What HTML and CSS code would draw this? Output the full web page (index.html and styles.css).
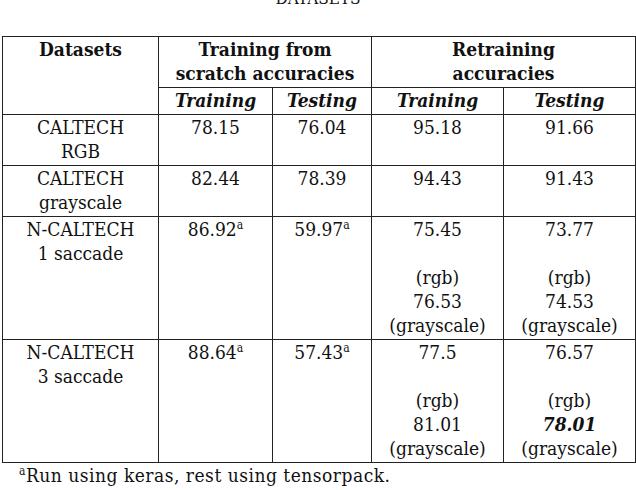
FILE: index.html
```html
<!DOCTYPE html>
<html lang="en">
<head>
  <meta charset="UTF-8">
  <title>Datasets</title>
  <link rel="stylesheet" href="styles.css">
</head>
<body>
  <p class="caption">Datasets</p>

  <table class="results">
    <colgroup>
      <col class="c-name">
      <col class="c-train">
      <col class="c-test">
      <col class="c-retrain">
      <col class="c-retest">
    </colgroup>
    <thead>
      <tr>
        <th rowspan="2">Datasets</th>
        <th colspan="2">Training from<br>scratch accuracies</th>
        <th colspan="2">Retraining<br>accuracies</th>
      </tr>
      <tr class="sub">
        <th>Training</th>
        <th>Testing</th>
        <th>Training</th>
        <th>Testing</th>
      </tr>
    </thead>
    <tbody>
      <tr>
        <td>CALTECH<br>RGB</td>
        <td>78.15</td>
        <td>76.04</td>
        <td>95.18</td>
        <td>91.66</td>
      </tr>
      <tr>
        <td>CALTECH<br>grayscale</td>
        <td>82.44</td>
        <td>78.39</td>
        <td>94.43</td>
        <td>91.43</td>
      </tr>
      <tr>
        <td>N-CALTECH<br>1 saccade</td>
        <td>86.92<sup>a</sup></td>
        <td>59.97<sup>a</sup></td>
        <td>75.45<br><br>(rgb)<br>76.53<br>(grayscale)</td>
        <td>73.77<br><br>(rgb)<br>74.53<br>(grayscale)</td>
      </tr>
      <tr>
        <td>N-CALTECH<br>3 saccade</td>
        <td>88.64<sup>a</sup></td>
        <td>57.43<sup>a</sup></td>
        <td>77.5<br><br>(rgb)<br>81.01<br>(grayscale)</td>
        <td>76.57<br><br>(rgb)<br><b class="best">78.01</b><br>(grayscale)</td>
      </tr>
    </tbody>
  </table>

  <p class="note"><sup>a</sup>Run using keras, rest using tensorpack.</p>
</body>
</html>
```

FILE: styles.css
```css
html, body {
  margin: 0;
  padding: 0;
  background: #fff;
  color: #111;
}
body,
.results,
.results th,
.results td {
  font-family: "DejaVu Serif Condensed", "DejaVu Serif", serif;
}
.caption {
  margin: -12px 0 28px;
  font-size: 17px;
  line-height: 20px;
  text-align: center;
  text-transform: uppercase;
}
.results {
  margin-left: 2px;
  width: 633px;
  table-layout: fixed;
  border-collapse: collapse;
  border: 1px solid #222;
  font-size: 19px;
  line-height: 24px;
}
.c-name { width: 156px; }
.c-train { width: 114px; }
.c-test { width: 99px; }
.c-retrain { width: 132px; }
.c-retest { width: 132px; }
.results th,
.results td {
  border: 1px solid #222;
  padding: 0 2px 2px;
  text-align: center;
  vertical-align: top;
}
.results th {
  font-weight: bold;
}
.results .sub th {
  font-style: italic;
}
.results sup,
.note sup {
  font-size: 12px;
  line-height: 0;
  vertical-align: 7px;
}
.best {
  font-style: italic;
}
.note {
  margin: 0 0 0 19px;
  font-size: 19px;
  line-height: 24px;
  letter-spacing: 0.5px;
}
```
